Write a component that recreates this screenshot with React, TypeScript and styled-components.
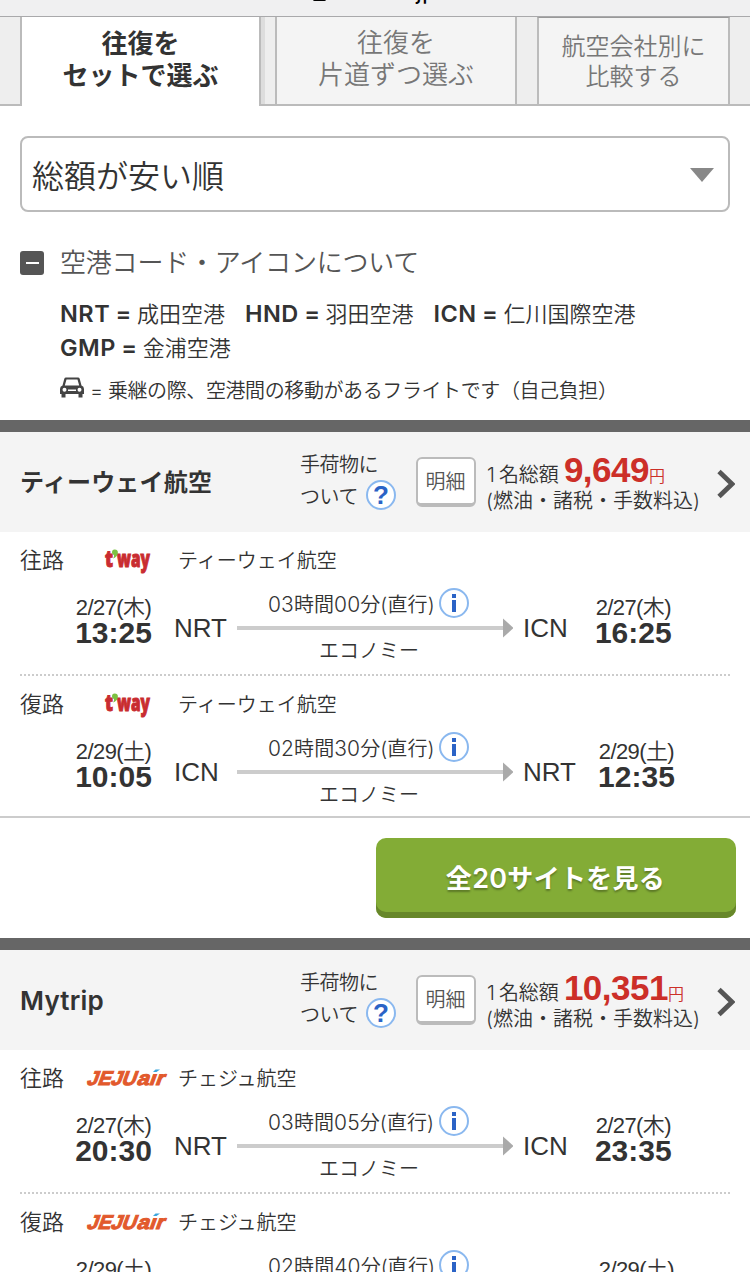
import React from 'react';
import styled, { createGlobalStyle } from 'styled-components';

const GlobalStyle = createGlobalStyle`
  * { box-sizing: border-box; }
  html, body { margin: 0; padding: 0; background: #fff; }
  body {
    width: 750px;
    height: 1272px;
    overflow: hidden;
    color: #333;
    font-family: Inter, "Noto Sans CJK JP", sans-serif;
    font-weight: 350;
    font-size: 20px;
  }
`;

const Page = styled.main`
  width: 750px;
  height: 1272px;
  overflow: hidden;
  background: #fff;
`;

const AddressBar = styled.div`
  display: flex;
  justify-content: center;
  align-items: flex-start;
  gap: 4px;
  height: 17px;
  overflow: hidden;
  background: #f0f0f1;
  border-bottom: 1px solid #a9a9ab;
`;

const AddressText = styled.span`
  height: 32px;
  line-height: 32px;
  margin-top: -25px;
  color: #000;
  font-family: Inter, sans-serif;
  font-size: 24px;
  font-weight: 400;
`;

const LockIcon = styled.svg`
  margin-top: -15px;
  width: 13px;
  height: 16px;
`;

const Tabs = styled.nav`
  display: flex;
  height: 89px;
  background: #eee;
`;

const TabSpacer = styled.div<{ $w: number; $shade?: boolean }>`
  width: ${(p) => p.$w}px;
  border-bottom: 2px solid #bbb;
  box-shadow: ${(p) => (p.$shade ? 'inset 4px 0 0 #ddd' : 'none')};
`;

const Tab = styled.button<{ $w: number; $active?: boolean; $small?: boolean }>`
  display: flex;
  justify-content: center;
  align-items: flex-start;
  width: ${(p) => p.$w}px;
  margin: 0;
  padding: ${(p) => (p.$active ? 9 : p.$small ? 12 : 8)}px 0 0;
  text-align: center;
  border: 0 solid #bbb;
  border-left-width: 2px;
  border-right-width: 2px;
  border-bottom-width: ${(p) => (p.$active ? 0 : 2)}px;
  border-top: ${(p) => (p.$small ? '1px solid #999' : '0')};
  background: ${(p) => (p.$active ? '#fff' : '#f4f4f4')};
  color: ${(p) => (p.$active ? '#333' : '#777')};
  font-family: "Noto Sans CJK JP", sans-serif;
  font-weight: ${(p) => (p.$active ? 700 : 350)};
  font-size: ${(p) => (p.$small ? 24 : 26)}px;
  line-height: ${(p) => (p.$small ? 30 : 32)}px;
  white-space: pre-line;
`;

const SortSelect = styled.div`
  display: flex;
  align-items: center;
  justify-content: space-between;
  height: 76px;
  margin: 30px 20px 0;
  padding: 5px 14px 0 10px;
  border: 2px solid #bbb;
  border-radius: 8px;
  font-size: 32px;
  line-height: 40px;
`;

const Caret = styled.svg`
  width: 24px;
  height: 14px;
  margin-top: -4px;
`;

const Legend = styled.section`
  height: 208px;
  padding: 34px 20px 0;
`;

const LegendHead = styled.div`
  display: flex;
  align-items: center;
  height: 34px;
  gap: 16px;
  color: #555;
  font-size: 26px;
  letter-spacing: -0.2px;
  line-height: 34px;
`;

const CollapseIcon = styled.span`
  display: flex;
  align-items: center;
  justify-content: center;
  width: 24px;
  height: 24px;
  border-radius: 3px;
  background: #555;
  &::before {
    content: "";
    width: 13px;
    height: 2px;
    background: #fff;
  }
`;

const Codes = styled.div`
  display: flex;
  flex-wrap: wrap;
  column-gap: 20px;
  margin: 17px 0 0 40px;
  width: 640px;
  font-size: 22px;
  line-height: 34px;
`;

const CodeItem = styled.span`
  white-space: nowrap;
  b {
    font-weight: 600;
    font-size: 23.5px;
    letter-spacing: 0.5px;
    margin-right: 5px;
    word-spacing: -1px;
  }
`;

const TransferNote = styled.div`
  display: flex;
  align-items: center;
  gap: 6px;
  height: 34px;
  margin: 7px 0 0 40px;
  letter-spacing: -0.4px;
  white-space: nowrap;
`;

const CarIcon = styled.svg`
  width: 24px;
  height: 21px;
  margin-top: -3px;
`;

const Divider = styled.div`
  height: 12px;
  background: #666;
`;

const OfferHeader = styled.header`
  display: grid;
  grid-template-columns: 280px 116px 70px 1fr 18px;
  height: 100px;
  padding: 0 15px 0 20px;
  background: #f4f4f4;
`;

const Vendor = styled.h2`
  margin: 0;
  font-size: 24px;
  font-weight: 700;
  letter-spacing: 0.2px;
  line-height: 102px;
  white-space: nowrap;
`;

const LatinVendor = styled.span`
  font-weight: 600;
  font-size: 26px;
`;

const Baggage = styled.div`
  padding-top: 18px;
  line-height: 30px;
`;

const BaggageLine = styled.div`
  display: flex;
  align-items: center;
  gap: 8px;
  height: 30px;
  letter-spacing: -0.5px;
`;

const BaggageWord = styled.span`
  padding-top: 3px;
`;

const RoundMark = styled.span`
  display: inline-flex;
  align-items: center;
  justify-content: center;
  flex: none;
  width: 30px;
  height: 30px;
  border: 2px solid #8ab8ef;
  border-radius: 50%;
  background: #fff;
  color: #2b63c6;
  font-family: "Liberation Sans", sans-serif;
  font-weight: 700;
  font-size: 26px;
  line-height: 26px;
  letter-spacing: 0;
`;

const DetailButton = styled.button`
  width: 60px;
  height: 50px;
  margin: 25px 0 0;
  padding: 1px 1px 0 0;
  border: 2px solid #bbb;
  border-bottom-width: 4px;
  border-radius: 6px;
  background: #fff;
  color: #555;
  font: inherit;
  font-size: 20px;
  line-height: 42px;
`;

const PriceBlock = styled.div`
  padding: 20px 0 0;
  white-space: nowrap;
`;

const PriceLine = styled.div`
  display: flex;
  align-items: baseline;
  height: 36px;
  padding-left: 1px;
  line-height: 36px;
`;

const PersonCount = styled.span`
  margin-right: 4px;
`;

const Price = styled.strong`
  margin-left: 5px;
  color: #cc2f28;
  font-family: "Liberation Sans", sans-serif;
  font-weight: 700;
  font-size: 35px;
  letter-spacing: -0.5px;
`;

const Yen = styled.span`
  color: #cc2f28;
  font-size: 16px;
`;

const PriceNote = styled.div`
  height: 26px;
  line-height: 27px;
`;

const Chevron = styled.svg`
  width: 18px;
  height: 30px;
  margin-top: 37px;
`;

const Leg = styled.article<{ $dotted?: boolean }>`
  height: ${(p) => (p.$dotted ? 144 : 140)}px;
  margin: 0 20px;
  padding-top: 12px;
  ${(p) =>
    p.$dotted &&
    `background: repeating-linear-gradient(90deg, #ccc 0 2px, transparent 2px 4px) 0 100% / 100% 2px no-repeat;`}
`;

const Carrier = styled.div`
  display: grid;
  grid-template-columns: 65px 93px 1fr;
  grid-template-rows: 32px;
  height: 32px;
`;

const Direction = styled.span`
  font-size: 22px;
  line-height: 32px;
`;

const CarrierName = styled.span`
  font-size: 20px;
  line-height: 34px;
`;

const Logo = styled.svg`
  width: 93px;
  height: 32px;
  overflow: visible;
`;

const Route = styled.div`
  display: grid;
  grid-template-columns: 44px 110px 63px 286px 1fr;
  height: 96px;
`;

const When = styled.div`
  width: 98px;
  padding: 17px 0 0 1px;
  text-align: center;
  font-family: "Liberation Sans", "Noto Sans CJK JP", sans-serif;
`;

const DateText = styled.div`
  height: 26px;
  line-height: 29px;
  font-size: 22px;
  letter-spacing: -0.6px;
  white-space: nowrap;
`;

const Time = styled.div`
  height: 28px;
  line-height: 28px;
  font-size: 30px;
  font-weight: 700;
`;

const Airport = styled.span`
  padding-top: 37px;
  line-height: 30px;
  font-family: "Liberation Sans", sans-serif;
  font-size: 26px;
  font-weight: 400;
`;

const Arrival = styled.div<{ $gap: number }>`
  display: flex;
  gap: ${(p) => p.$gap}px;
`;

const Path = styled.div`
  width: 276px;
`;

const Duration = styled.div`
  display: flex;
  align-items: center;
  justify-content: space-between;
  width: 201px;
  height: 30px;
  margin: 12px 0 0 31px;
  font-size: 20px;
  line-height: 30px;
  white-space: nowrap;
`;

const DurationText = styled.span`
  padding-top: 3px;
  letter-spacing: 0.1px;
`;

const Numeral = styled.span`
  font-size: 21px;
`;

const Arrow = styled.svg`
  display: block;
  width: 276px;
  height: 20px;
`;

const Cabin = styled.div`
  height: 26px;
  line-height: 26px;
  text-align: center;
  padding-right: 12px;
`;

const MoreRow = styled.div`
  display: flex;
  justify-content: flex-end;
  height: 122px;
  padding: 20px 14px 0 0;
  border-top: 2px solid #ccc;
`;

const MoreButton = styled.button`
  width: 360px;
  height: 80px;
  padding: 2px 1px 0 0;
  border: 0;
  border-radius: 10px;
  background: #83ac36;
  box-shadow: inset 0 -6px 0 #67872a;
  color: #fff;
  font-family: Inter, "Noto Sans CJK JP", sans-serif;
  font-size: 26px;
  font-weight: 600;
  letter-spacing: 0.3px;
  line-height: 78px;
  text-shadow: 0 2px 2px rgba(0, 0, 0, 0.3);
`;

const SiteCount = styled.span`
  font-size: 27px;
`;

type Airline = 'tway' | 'jeju';

interface LegData {
  direction: string;
  date: string;
  from: string;
  to: string;
  depart?: string;
  arrive?: string;
  hours: string;
  minutes: string;
}

const TwayLogo = () => (
  <Logo viewBox="0 0 93 32">
    <g fontFamily="Open Sans, sans-serif" fontWeight="800" fontSize="22" fill="#c92c30" stroke="#c92c30" strokeWidth="1">
      <text x="20" y="22.5" textLength="8" lengthAdjust="spacingAndGlyphs">t</text>
      <text x="32" y="22.5" textLength="33" lengthAdjust="spacingAndGlyphs">way</text>
    </g>
    <path d="M27 8.5 Q27 5.5 29.5 5.5 Q33.5 5.7 32.8 9.5 Q32 13 28 14.5 Q29.5 12.5 29 11 Q27 10.5 27 8.5 Z" fill="#7cc142" />
  </Logo>
);

const JejuLogo = () => (
  <Logo viewBox="0 0 93 32">
    <g
      transform="translate(0 22.5) skewX(-20)"
      fontFamily="Liberation Sans, sans-serif"
      fontWeight="700"
      fontSize="20"
      fill="#e2592c"
      stroke="#e2592c"
      strokeWidth="1"
    >
      <text x="1" y="0" textLength="49" lengthAdjust="spacingAndGlyphs">JEJU</text>
      <text x="51" y="0" textLength="27" lengthAdjust="spacingAndGlyphs">aır</text>
    </g>
    <path d="M68 10 L70.5 7.5 L75 7.5 L71.5 10 Z" fill="#3aa5dc" />
  </Logo>
);

const InfoMark = () => (
  <RoundMark aria-label="info">
    <svg width="4" height="18" viewBox="0 0 4 18">
      <path d="M0 0 H4 V4 H0 Z M0 6 H4 V18 H0 Z" fill="#2b63c6" />
    </svg>
  </RoundMark>
);

const FlightLeg = ({ leg, airline, dotted }: { leg: LegData; airline: Airline; dotted?: boolean }) => (
  <Leg $dotted={dotted}>
    <Carrier>
      <Direction>{leg.direction}</Direction>
      {airline === 'tway' ? <TwayLogo /> : <JejuLogo />}
      <CarrierName>{airline === 'tway' ? 'ティーウェイ航空' : 'チェジュ航空'}</CarrierName>
    </Carrier>
    <Route>
      <span />
      <When>
        <DateText>{leg.date}</DateText>
        <Time>{leg.depart}</Time>
      </When>
      <Airport>{leg.from}</Airport>
      <Path>
        <Duration>
          <DurationText>
            <Numeral>{leg.hours}</Numeral>時間<Numeral>{leg.minutes}</Numeral>分(直行)
          </DurationText>
          <InfoMark />
        </Duration>
        <Arrow viewBox="0 0 276 20">
          <rect x="0" y="8" width="268" height="4" fill="#ccc" />
          <path d="M266 0.5 L276.5 10 L266 19.5 Z" fill="#aaa" />
        </Arrow>
        <Cabin>エコノミー</Cabin>
      </Path>
      <Arrival $gap={leg.to === 'ICN' ? 16 : 11}>
        <Airport>{leg.to}</Airport>
        <When>
          <DateText>{leg.date}</DateText>
          <Time>{leg.arrive}</Time>
        </When>
      </Arrival>
    </Route>
  </Leg>
);

const Header = ({ vendor, price }: { vendor: React.ReactNode; price: string }) => (
  <OfferHeader>
    <Vendor>{vendor}</Vendor>
    <Baggage>
      <BaggageLine>手荷物に</BaggageLine>
      <BaggageLine>
        <BaggageWord>ついて</BaggageWord>
        <RoundMark>?</RoundMark>
      </BaggageLine>
    </Baggage>
    <DetailButton>明細</DetailButton>
    <PriceBlock>
      <PriceLine>
        <PersonCount>1</PersonCount>名総額<Price>{price}</Price>
        <Yen>円</Yen>
      </PriceLine>
      <PriceNote>(燃油・諸税・手数料込)</PriceNote>
    </PriceBlock>
    <Chevron viewBox="0 0 18 30">
      <path d="M2 2.5 L15 15 L2 27.5" fill="none" stroke="#555" strokeWidth="4.8" />
    </Chevron>
  </OfferHeader>
);

const twayLegs: LegData[] = [
  { direction: '往路', date: '2/27(木)', from: 'NRT', to: 'ICN', depart: '13:25', arrive: '16:25', hours: '03', minutes: '00' },
  { direction: '復路', date: '2/29(土)', from: 'ICN', to: 'NRT', depart: '10:05', arrive: '12:35', hours: '02', minutes: '30' },
];

const jejuLegs: LegData[] = [
  { direction: '往路', date: '2/27(木)', from: 'NRT', to: 'ICN', depart: '20:30', arrive: '23:35', hours: '03', minutes: '05' },
  { direction: '復路', date: '2/29(土)', from: 'ICN', to: 'NRT', hours: '02', minutes: '40' },
];

const airports = [
  ['NRT', '成田空港'],
  ['HND', '羽田空港'],
  ['ICN', '仁川国際空港'],
  ['GMP', '金浦空港'],
];

export default function App() {
  return (
    <Page lang="ja">
      <GlobalStyle />
      <AddressBar>
        <LockIcon viewBox="0 0 13 16">
          <rect x="0" y="6" width="13" height="10" rx="1.5" fill="#000" />
        </LockIcon>
        <AddressText>tour.ne.jp</AddressText>
      </AddressBar>
      <Tabs>
        <TabSpacer $w={20} />
        <Tab $w={241} $active>{'往復を\nセットで選ぶ'}</Tab>
        <TabSpacer $w={14} $shade />
        <Tab $w={242}>{'往復を\n片道ずつ選ぶ'}</Tab>
        <TabSpacer $w={20} />
        <Tab $w={193} $small>{'航空会社別に\n比較する'}</Tab>
        <TabSpacer $w={20} />
      </Tabs>
      <SortSelect>
        総額が安い順
        <Caret viewBox="0 0 24 14">
          <path d="M0 0 H24 L12 14 Z" fill="#888" />
        </Caret>
      </SortSelect>
      <Legend>
        <LegendHead>
          <CollapseIcon />
          空港コード・アイコンについて
        </LegendHead>
        <Codes>
          {airports.map(([code, name]) => (
            <CodeItem key={code}>
              <b>{code} =</b>
              {name}
            </CodeItem>
          ))}
        </Codes>
        <TransferNote>
          <CarIcon viewBox="0 0 24 21">
            <path
              fillRule="evenodd"
              fill="#444"
              d="M6 0.5 H18 Q19.3 0.5 19.7 1.8 L21.5 8.5 Q24 9.3 24 12 V17 H22.5 V20.5 H18.5 V17 H5.5 V20.5 H1.5 V17 H0 V12 Q0 9.3 2.5 8.5 L4.3 1.8 Q4.7 0.5 6 0.5 Z M6.5 2.5 L4.8 8.5 H19.2 L17.5 2.5 Z M4.5 10.7 A2 2 0 1 0 4.5 14.7 A2 2 0 1 0 4.5 10.7 Z M19.5 10.7 A2 2 0 1 0 19.5 14.7 A2 2 0 1 0 19.5 10.7 Z M8 12.5 V14 H16 V12.5 Z"
            />
          </CarIcon>
          = 乗継の際、空港間の移動があるフライトです（自己負担）
        </TransferNote>
      </Legend>
      <Divider />
      <Header vendor="ティーウェイ航空" price="9,649" />
      <FlightLeg leg={twayLegs[0]} airline="tway" dotted />
      <FlightLeg leg={twayLegs[1]} airline="tway" />
      <MoreRow>
        <MoreButton>
          全<SiteCount>20</SiteCount>サイトを見る
        </MoreButton>
      </MoreRow>
      <Divider />
      <Header vendor={<LatinVendor>Mytrip</LatinVendor>} price="10,351" />
      <FlightLeg leg={jejuLegs[0]} airline="jeju" dotted />
      <FlightLeg leg={jejuLegs[1]} airline="jeju" />
    </Page>
  );
}
